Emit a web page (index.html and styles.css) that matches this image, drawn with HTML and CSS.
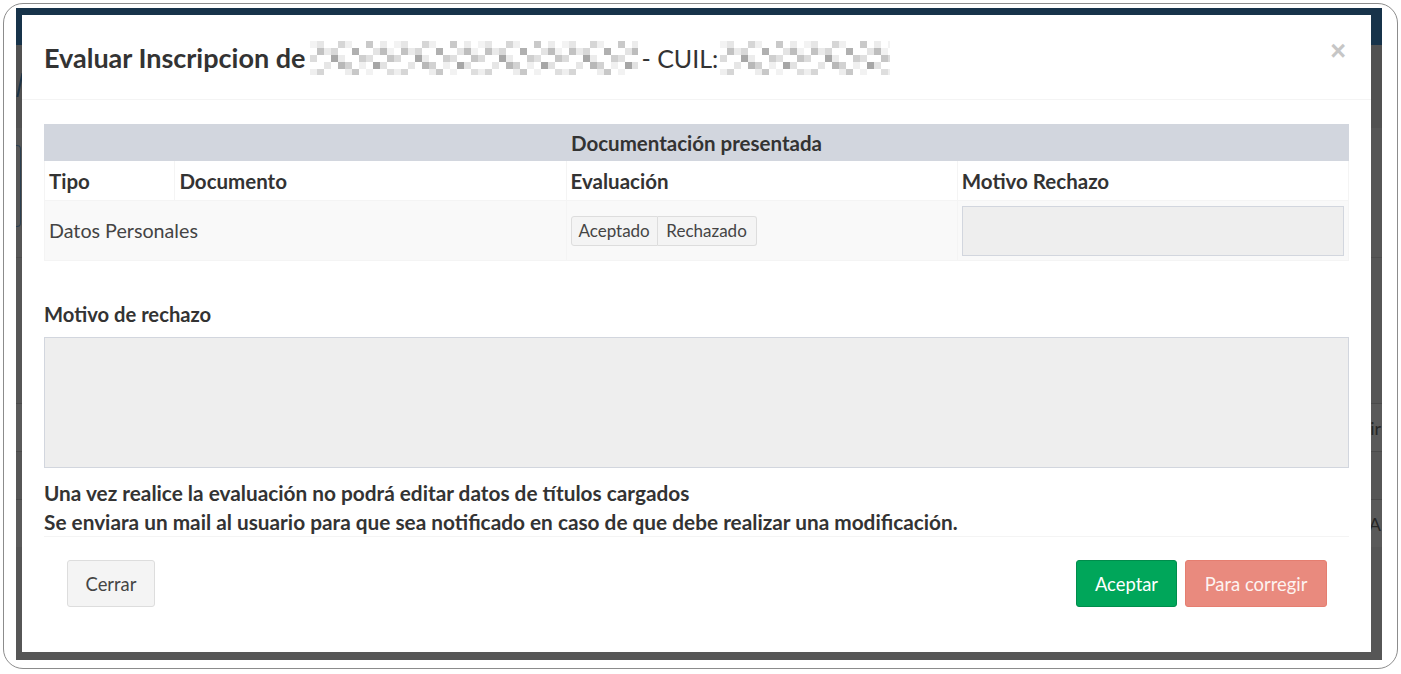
FILE: index.html
```html
<!DOCTYPE html>
<html lang="es">
<head>
<meta charset="utf-8">
<title>Evaluar Inscripcion</title>
<link rel="stylesheet" href="styles.css">
</head>
<body>
<div class="frame">
  <div class="screen">
    <div class="page">
      <div class="navbar"></div>
      <div class="page-body">
        <div class="pb-top"><div class="slash"></div></div>
        <div class="pb-box"></div>
        <div class="pb-line"></div>
        <div class="pb-rows">
          <div class="pb-row">ir</div>
          <div class="pb-row"></div>
          <div class="pb-row">PA</div>
        </div>
      </div>
    </div>

    <div class="modal">
      <div class="m-head">
        <h4 class="m-title"><span>Evaluar Inscripcion de</span>
          <svg class="blur b1" width="328" height="34" viewBox="0 0 328 34">
            <defs>
              <pattern id="mz" width="84" height="35" patternUnits="userSpaceOnUse">
                <rect x="0" y="0" width="7" height="7" fill="#f3f3f3"/>
                <rect x="7" y="0" width="7" height="7" fill="#e6e6e6"/>
                <rect x="28" y="0" width="7" height="7" fill="#d6d6d6"/>
                <rect x="35" y="0" width="7" height="7" fill="#f0f0f0"/>
                <rect x="56" y="0" width="7" height="7" fill="#c9c9c9"/>
                <rect x="70" y="0" width="7" height="7" fill="#ececec"/>
                <rect x="7" y="7" width="7" height="7" fill="#c2c2c2"/>
                <rect x="14" y="7" width="7" height="7" fill="#eaeaea"/>
                <rect x="21" y="7" width="7" height="7" fill="#d8d8d8"/>
                <rect x="42" y="7" width="7" height="7" fill="#b0b0b0"/>
                <rect x="63" y="7" width="7" height="7" fill="#e4e4e4"/>
                <rect x="70" y="7" width="7" height="7" fill="#bdbdbd"/>
                <rect x="77" y="7" width="7" height="7" fill="#f2f2f2"/>
                <rect x="0" y="14" width="7" height="7" fill="#dcdcdc"/>
                <rect x="21" y="14" width="7" height="7" fill="#a8a8a8"/>
                <rect x="28" y="14" width="7" height="7" fill="#ececec"/>
                <rect x="49" y="14" width="7" height="7" fill="#cfcfcf"/>
                <rect x="56" y="14" width="7" height="7" fill="#e0e0e0"/>
                <rect x="77" y="14" width="7" height="7" fill="#c6c6c6"/>
                <rect x="14" y="21" width="7" height="7" fill="#e6e6e6"/>
                <rect x="28" y="21" width="7" height="7" fill="#b8b8b8"/>
                <rect x="35" y="21" width="7" height="7" fill="#d2d2d2"/>
                <rect x="49" y="21" width="7" height="7" fill="#f0f0f0"/>
                <rect x="63" y="21" width="7" height="7" fill="#a6a6a6"/>
                <rect x="70" y="21" width="7" height="7" fill="#e2e2e2"/>
                <rect x="0" y="28" width="7" height="7" fill="#efefef"/>
                <rect x="7" y="28" width="7" height="7" fill="#d6d6d6"/>
                <rect x="35" y="28" width="7" height="7" fill="#ededed"/>
                <rect x="42" y="28" width="7" height="7" fill="#c8c8c8"/>
                <rect x="56" y="28" width="7" height="7" fill="#f2f2f2"/>
                <rect x="77" y="28" width="7" height="7" fill="#dedede"/>
              </pattern>
            </defs>
            <rect width="328" height="34" fill="url(#mz)"/>
          </svg><span class="cuil">- CUIL:</span><svg class="blur b2" width="170" height="34" viewBox="0 0 170 34">
            <rect width="170" height="34" fill="url(#mz)"/>
          </svg>
        </h4>
        <button class="close" type="button">×</button>
      </div>

      <div class="m-body">
        <table class="docs">
          <colgroup>
            <col class="c-tipo"><col class="c-doc"><col class="c-eval"><col class="c-mot">
          </colgroup>
          <tr class="r1"><th colspan="4" class="caption">Documentación presentada</th></tr>
          <tr class="r2"><th>Tipo</th><th>Documento</th><th>Evaluación</th><th>Motivo Rechazo</th></tr>
          <tr class="r3">
            <td colspan="2">Datos Personales</td>
            <td>
              <div class="btn-group">
                <button class="gbtn" type="button">Aceptado</button><button class="gbtn" type="button">Rechazado</button>
              </div>
            </td>
            <td><input class="cell-input" type="text" readonly></td>
          </tr>
        </table>

        <label class="lbl">Motivo de rechazo</label>
        <textarea class="ta" readonly></textarea>

        <p class="note">Una vez realice la evaluación no podrá editar datos de títulos cargados</p>
        <p class="note">Se enviara un mail al usuario para que sea notificado en caso de que debe realizar una modificación.</p>
      </div>

      <div class="m-foot">
        <button class="btn btn-default" type="button">Cerrar</button>
        <div class="foot-right">
          <button class="btn btn-success" type="button">Aceptar</button>
          <button class="btn btn-danger" type="button">Para corregir</button>
        </div>
      </div>
    </div>
  </div>
</div>
</body>
</html>
```

FILE: styles.css
```css
* { box-sizing: border-box; }

html, body {
  margin: 0;
  padding: 0;
  background: #ffffff;
}

body {
  font-family: Lato, "Open Sans", "Liberation Sans", sans-serif;
  color: #333333;
}

.frame {
  margin: 3px;
  height: 666px;
  border: 1px solid #8c8c8c;
  border-radius: 20px;
  padding: 4px 15px 8px 12px;
}

.screen {
  position: relative;
  height: 100%;
  overflow: hidden;
  background: #555555;
}

/* background page (seen through the backdrop) */
.page {
  height: 100%;
  display: flex;
  flex-direction: column;
}

.navbar {
  flex: none;
  height: 37px;
  background: #17334a;
}

.page-body {
  flex: 1;
  background: #565656;
}

.pb-top {
  height: 83px;
  background: #515151;
  padding-top: 28px;
}

.slash {
  width: 2px;
  height: 24px;
  margin-left: 3px;
  background: #1d3346;
  transform: skewX(-12deg);
}

.pb-box {
  margin-top: 17px;
  width: 5px;
  height: 82px;
  border: 1px solid #2b3f50;
  border-left: none;
  border-radius: 0 4px 4px 0;
}

.pb-line {
  margin-top: 30px;
  border-top: 1px solid #4d4d4d;
}

.pb-rows {
  margin-top: 145px;
}

.pb-row {
  height: 48px;
  border-top: 1px solid #4a4a4a;
  background: #5a5a5a;
  text-align: right;
  padding-right: 1px;
  font-size: 18px;
  line-height: 48px;
  color: #262626;
}

.pb-row:nth-child(2) {
  background: #565656;
}

/* modal */
.modal {
  position: absolute;
  left: 6px;
  top: 7px;
  width: 1349px;
  height: 637px;
  background: #ffffff;
  color: #333333;
}

.m-head {
  display: flex;
  justify-content: space-between;
  align-items: flex-start;
  padding: 26px 25px 24px 22px;
  border-bottom: 1px solid #f4f4f4;
}

.m-title {
  margin: 0;
  height: 34px;
  font-size: 27px;
  line-height: 34px;
  font-weight: 700;
  color: #333333;
  display: flex;
  align-items: center;
  white-space: nowrap;
}

.blur {
  display: block;
  flex: none;
}

.b1 { margin-left: 5px; }
.b2 { margin-left: 2px; }

.cuil {
  font-size: 25px;
  font-weight: 400;
  margin-left: 3px;
}

.close {
  border: 0;
  background: none;
  padding: 0;
  margin-top: -3px;
  font-family: "Liberation Sans", Arial, sans-serif;
  font-size: 27px;
  font-weight: 700;
  line-height: 1;
  color: #c6c6c6;
}

.m-body {
  padding: 24px 22px 0 22px;
}

.docs {
  width: 100%;
  table-layout: fixed;
  border-collapse: collapse;
  border: 1px solid #f4f4f4;
  font-size: 20.5px;
}

.c-tipo { width: 10%; }
.c-doc { width: 30%; }
.c-eval { width: 30%; }
.c-mot { width: 30%; }

.docs th,
.docs td {
  border: 1px solid #f4f4f4;
  padding: 0 4px;
  text-align: left;
  vertical-align: middle;
}

.docs th {
  font-weight: 700;
  color: #333333;
}

.r1 { height: 36px; }
.r2 { height: 40px; }
.r3 { height: 60px; background: #f9f9f9; }

.docs th.caption {
  background: #d2d6de;
  text-align: center;
  border-color: #d2d6de;
}

.docs td {
  font-size: 19.7px;
  color: #444444;
}

.btn-group {
  display: flex;
}

.gbtn {
  height: 30px;
  padding: 0;
  font-family: inherit;
  font-size: 17px;
  color: #444444;
  background: #f4f4f4;
  border: 1px solid #dddddd;
  border-radius: 0;
}

.gbtn:first-child {
  border-radius: 3px 0 0 3px;
  width: 87px;
}

.gbtn:last-child {
  border-left: none;
  border-radius: 0 3px 3px 0;
  width: 99px;
}

.cell-input {
  display: block;
  width: 100%;
  height: 50px;
  background: #eeeeee;
  border: 1px solid #d2d6de;
}

.lbl {
  display: block;
  margin-top: 40px;
  font-size: 20.2px;
  font-weight: 700;
  line-height: 26px;
}

.ta {
  display: block;
  width: 100%;
  height: 131px;
  margin: 10px 0 0;
  background: #eeeeee;
  border: 1px solid #d2d6de;
  resize: none;
}

.note {
  margin: 0;
  font-size: 20.8px;
  font-weight: 700;
  line-height: 29px;
}

.ta + .note {
  margin-top: 10px;
}

.m-foot {
  margin: 0 22px;
  border-top: 1px solid #f4f4f4;
  padding: 23px 22px 0 23px;
  display: flex;
  justify-content: space-between;
}

.foot-right {
  display: flex;
  gap: 8px;
}

.btn {
  height: 47px;
  padding: 0;
  font-family: inherit;
  font-size: 18.4px;
  border-radius: 3px;
  border: 1px solid transparent;
}

.btn-default {
  width: 88px;
  background: #f4f4f4;
  border-color: #dddddd;
  color: #444444;
}

.btn-success {
  width: 101px;
  background: #00a65a;
  border-color: #008d4c;
  color: #ffffff;
}

.btn-danger {
  width: 142px;
  background: #e98a7e;
  border-color: #e57e70;
  color: #fdf3f1;
}
```
